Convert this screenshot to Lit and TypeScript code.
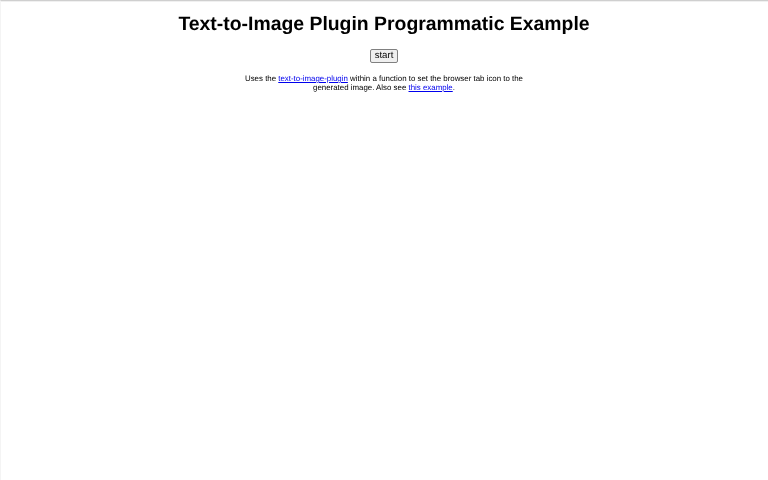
import { LitElement, html, css } from "lit";
import { customElement } from "lit/decorators.js";

@customElement("app-root")
export class AppRoot extends LitElement {
  static styles = css`
    :host {
      display: block;
      box-sizing: border-box;
      width: 768px;
      height: 480px;
      background: #fff;
      border-top: 1px solid #cfcfcf;
      border-left: 1px solid #f4f4f4;
      font-family: "Liberation Sans", Arial, sans-serif;
      color: #000;
      overflow: hidden;
      text-rendering: geometricPrecision;
      -webkit-font-smoothing: antialiased;
    }
    .page {
      display: flex;
      flex-direction: column;
      align-items: center;
      border-top: 1px solid #f0f0f0;
      padding-top: 11px;
      padding-right: 1px;
      filter: blur(0.35px);
    }
    h1 {
      margin: 0;
      font-size: 19.4px;
      line-height: 22px;
      font-weight: 700;
      text-align: center;
    }
    button {
      margin-top: 14px;
      box-sizing: border-box;
      width: 28px;
      height: 14px;
      padding: 0;
      font-family: inherit;
      font-size: 9.6px;
      line-height: 12px;
      text-rendering: geometricPrecision;
      color: #000;
      background: #efefef;
      border: 1px solid #808080;
      border-radius: 2px;
    }
    p {
      margin: 11px 0 0;
      width: 290px;
      font-size: 7.88px;
      line-height: 9px;
      text-align: center;
    }
    a { color: #00e; text-decoration: underline; }
  `;

  render() {
    return html`<div class="page">
      <h1>Text-to-Image Plugin Programmatic Example</h1>
      <button>start</button>
      <p>Uses the <a href="#">text-to-image-plugin</a> within a function to set the browser tab icon to the generated image. Also see <a href="#">this example</a>.</p>
    </div>`;
  }
}
